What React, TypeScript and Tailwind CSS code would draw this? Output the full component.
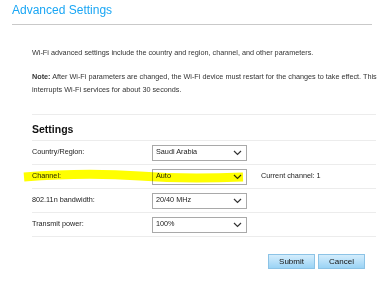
const rows = [
  { label: "Country/Region:", value: "Saudi Arabia" },
  { label: "Channel:", value: "Auto", note: "Current channel: 1" },
  { label: "802.11n bandwidth:", value: "20/40 MHz" },
  { label: "Transmit power:", value: "100%" },
];

const Chevron = () => (
  <svg width="9" height="6" viewBox="0 0 9 6" fill="none" className="shrink-0">
    <path d="M1 1L4.5 4.5L8 1" stroke="#333" strokeWidth="1.2" />
  </svg>
);

const FakeSelect = ({ value }: { value: string }) => (
  <div className="w-[95px] h-[16px] border border-[#a9a9a9] bg-white flex items-center justify-between pl-[3px] pr-[4px]">
    <span className="text-[7.25px] text-[#222]">{value}</span>
    <Chevron />
  </div>
);

export default function App() {
  return (
    <div className="w-[382px] h-[300px] bg-white relative overflow-hidden font-['Liberation_Sans',Arial,sans-serif]">
      <h1 className="pl-[12px] pt-[2px] text-[12px] leading-[16px] text-[#1aa6f4]">Advanced Settings</h1>
      <div className="ml-[12px] mr-[10px] mt-[6px] h-px bg-[#c9c9c9]" />

      <div className="pl-[32px] pr-[6px]">
        <p className="mt-[21px] text-[7.25px] leading-[13px] text-[#333]">
          Wi-Fi advanced settings include the country and region, channel, and other parameters.
        </p>
        <p className="mt-[11px] text-[7.25px] leading-[13px] text-[#333] whitespace-nowrap">
          <b>Note:</b> After Wi-Fi parameters are changed, the Wi-Fi device must restart for the changes to take
          effect. This
          <br />
          interrupts Wi-Fi services for about 30 seconds.
        </p>

        <div className="mt-[18px] border-t border-[#ececec]">
          <div className="h-[26px] pt-[4px] flex items-center border-b border-[#ececec]">
            <h2 className="text-[10.5px] font-bold text-[#111]">Settings</h2>
          </div>
          {rows.map((r) => (
            <div key={r.label} className="h-[24px] flex items-center border-b border-[#ececec]">
              <span className="w-[120px] text-[7.25px] text-[#222]">{r.label}</span>
              <FakeSelect value={r.value} />
              {r.note && <span className="ml-[14px] text-[7.25px] text-[#222]">{r.note}</span>}
            </div>
          ))}
        </div>

        <div className="mt-[17px] pr-[11px] flex justify-end gap-[3px]">
          <button className="w-[47px] h-[15px] border border-[#8cc3e6] bg-gradient-to-b from-[#d4edfc] to-[#9ad3f5] text-[8px] text-[#111] leading-none">
            Submit
          </button>
          <button className="w-[47px] h-[15px] border border-[#8cc3e6] bg-gradient-to-b from-[#d4edfc] to-[#9ad3f5] text-[8px] text-[#111] leading-none">
            Cancel
          </button>
        </div>
      </div>

      {/* marker highlight over the channel row */}
      <svg className="absolute left-0 top-[167px] mix-blend-multiply pointer-events-none" width="260" height="22" viewBox="0 0 260 22">
        <path d="M24 10 C60 7 100 6 140 9 C180 12 215 11 243 10" stroke="#ffff00" strokeWidth="9" fill="none" strokeLinecap="butt" />
      </svg>
    </div>
  );
}
